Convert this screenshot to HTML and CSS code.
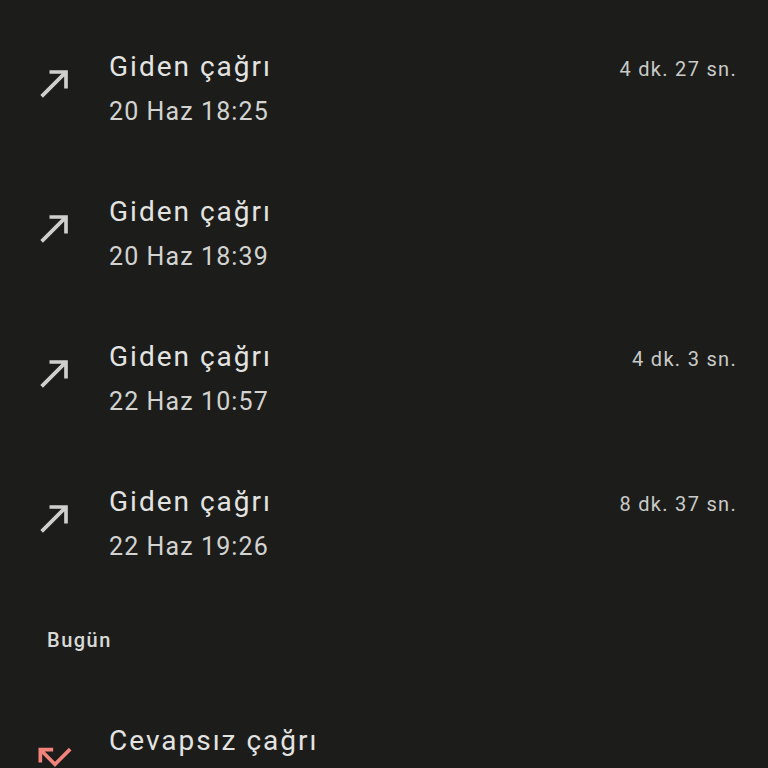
FILE: index.html
```html
<!DOCTYPE html>
<html lang="tr">
<head>
<meta charset="utf-8">
<link rel="stylesheet" href="styles.css">
</head>
<body>
<div class="list">
  <div class="row">
    <svg class="icon out" viewBox="0 0 24 24"><path d="M9 5v2h6.59L4 18.59 5.41 20 17 8.41V15h2V5z"/></svg>
    <div class="text">
      <div class="title">Giden çağrı</div>
      <div class="date">20 Haz 18:25</div>
    </div>
    <div class="dur">4 dk. 27 sn.</div>
  </div>
  <div class="row">
    <svg class="icon out" viewBox="0 0 24 24"><path d="M9 5v2h6.59L4 18.59 5.41 20 17 8.41V15h2V5z"/></svg>
    <div class="text">
      <div class="title">Giden çağrı</div>
      <div class="date">20 Haz 18:39</div>
    </div>
    <div class="dur"></div>
  </div>
  <div class="row">
    <svg class="icon out" viewBox="0 0 24 24"><path d="M9 5v2h6.59L4 18.59 5.41 20 17 8.41V15h2V5z"/></svg>
    <div class="text">
      <div class="title">Giden çağrı</div>
      <div class="date">22 Haz 10:57</div>
    </div>
    <div class="dur">4 dk. 3 sn.</div>
  </div>
  <div class="row">
    <svg class="icon out" viewBox="0 0 24 24"><path d="M9 5v2h6.59L4 18.59 5.41 20 17 8.41V15h2V5z"/></svg>
    <div class="text">
      <div class="title">Giden çağrı</div>
      <div class="date">22 Haz 19:26</div>
    </div>
    <div class="dur">8 dk. 37 sn.</div>
  </div>
  <div class="header">Bugün</div>
  <div class="row">
    <svg class="icon missed" viewBox="0 0 24 24"><path d="M19.59 7L12 14.59 6.41 9H11V7H3v8h2v-4.59l7 7 9-9z"/></svg>
    <div class="text">
      <div class="title">Cevapsız çağrı</div>
    </div>
    <div class="dur"></div>
  </div>
</div>
</body>
</html>
```
FILE: styles.css
```css
html, body {
  margin: 0;
  padding: 0;
  background: #1c1d1b;
  height: 768px;
  overflow: hidden;
}
body {
  font-family: Roboto, "Noto Sans", sans-serif;
  color: #e3e3e1;
}
.list {
  padding-top: 16px;
}
.row {
  display: flex;
  align-items: flex-start;
  height: 145px;
  box-sizing: border-box;
  padding: 30px 31px 0 33px;
}
.icon {
  width: 44px;
  height: 44px;
  flex: none;
  margin-top: 15px;
}
.icon.out { fill: #cfd0cd; }
.icon.missed { fill: #f2837a; }
.text {
  flex: 1;
  margin-left: 32px;
}
.title {
  font-size: 28px;
  line-height: 42px;
  letter-spacing: 2px;
}
.date {
  font-size: 25px;
  line-height: 48px;
  letter-spacing: 1.1px;
  color: #d2d3d0;
}
.dur {
  font-size: 20px;
  line-height: 46px;
  letter-spacing: 1.3px;
  color: #c9cac7;
}
.header {
  height: 94px;
  box-sizing: border-box;
  padding: 30px 0 0 47px;
  font-size: 20px;
  line-height: 28px;
  font-weight: 500;
  letter-spacing: 1.5px;
  color: #d8d9d6;
}
```
